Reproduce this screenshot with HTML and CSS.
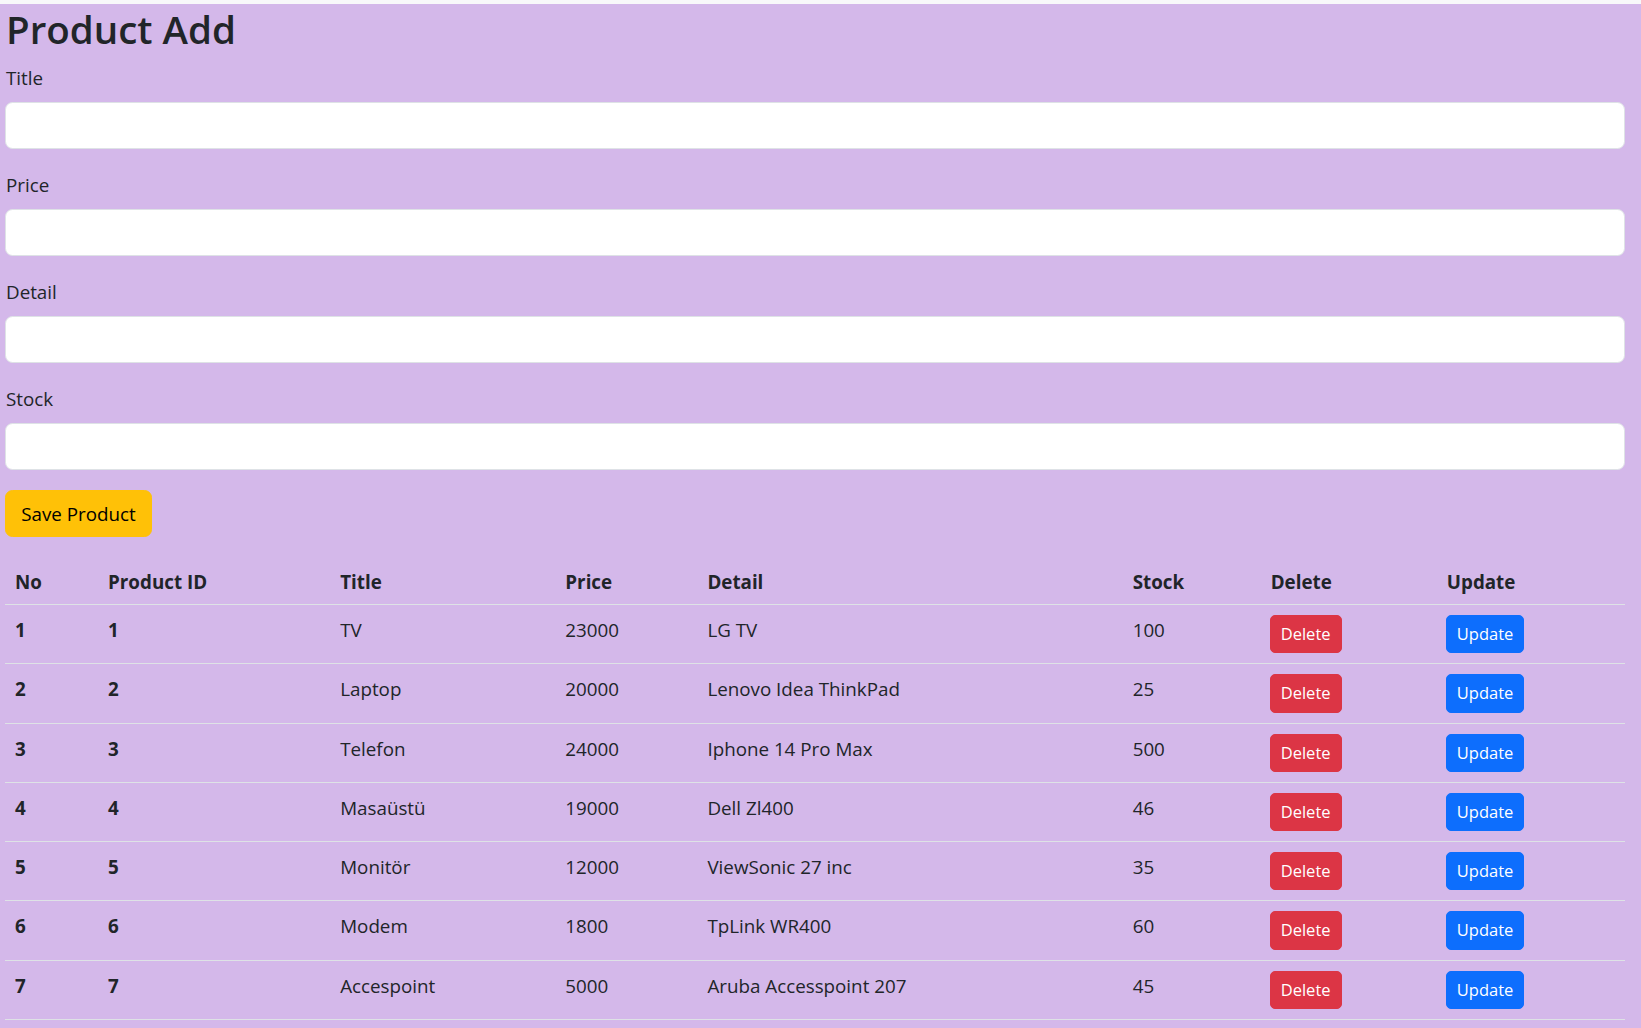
FILE: index.html
```html
<!DOCTYPE html>
<html lang="en">
<head>
<meta charset="utf-8">
<title>Product Add</title>
<link rel="stylesheet" href="styles.css">
</head>
<body>
<div class="page">
  <h1 class="title">Product Add</h1>
  <form class="form">
    <div class="field">
      <label class="label" for="title">Title</label>
      <input class="input" id="title" type="text">
    </div>
    <div class="field">
      <label class="label" for="price">Price</label>
      <input class="input" id="price" type="text">
    </div>
    <div class="field">
      <label class="label" for="detail">Detail</label>
      <input class="input" id="detail" type="text">
    </div>
    <div class="field">
      <label class="label" for="stock">Stock</label>
      <input class="input" id="stock" type="text">
    </div>
    <button type="button" class="btn btn-save">Save Product</button>
  </form>
  <table class="table">
    <colgroup>
      <col class="c-no"><col class="c-id"><col class="c-title"><col class="c-price"><col class="c-detail"><col class="c-stock"><col class="c-del"><col class="c-upd">
    </colgroup>
    <thead>
      <tr><th>No</th><th>Product ID</th><th>Title</th><th>Price</th><th>Detail</th><th>Stock</th><th>Delete</th><th>Update</th></tr>
    </thead>
    <tbody>
      <tr><th>1</th><th>1</th><td>TV</td><td>23000</td><td>LG TV</td><td>100</td><td><button class="btn-sm btn-del">Delete</button></td><td><button class="btn-sm btn-upd">Update</button></td></tr>
      <tr><th>2</th><th>2</th><td>Laptop</td><td>20000</td><td>Lenovo Idea ThinkPad</td><td>25</td><td><button class="btn-sm btn-del">Delete</button></td><td><button class="btn-sm btn-upd">Update</button></td></tr>
      <tr><th>3</th><th>3</th><td>Telefon</td><td>24000</td><td>Iphone 14 Pro Max</td><td>500</td><td><button class="btn-sm btn-del">Delete</button></td><td><button class="btn-sm btn-upd">Update</button></td></tr>
      <tr><th>4</th><th>4</th><td>Masaüstü</td><td>19000</td><td>Dell Zl400</td><td>46</td><td><button class="btn-sm btn-del">Delete</button></td><td><button class="btn-sm btn-upd">Update</button></td></tr>
      <tr><th>5</th><th>5</th><td>Monitör</td><td>12000</td><td>ViewSonic 27 inc</td><td>35</td><td><button class="btn-sm btn-del">Delete</button></td><td><button class="btn-sm btn-upd">Update</button></td></tr>
      <tr><th>6</th><th>6</th><td>Modem</td><td>1800</td><td>TpLink WR400</td><td>60</td><td><button class="btn-sm btn-del">Delete</button></td><td><button class="btn-sm btn-upd">Update</button></td></tr>
      <tr><th>7</th><th>7</th><td>Accespoint</td><td>5000</td><td>Aruba Accesspoint 207</td><td>45</td><td><button class="btn-sm btn-del">Delete</button></td><td><button class="btn-sm btn-upd">Update</button></td></tr>
    </tbody>
  </table>
</div>
</body>
</html>
```
FILE: styles.css
```css
* { box-sizing: border-box; }
html, body { margin: 0; padding: 0; }
body {
  background: #f8f8fa;
  font-family: "Open Sans", "Noto Sans", sans-serif;
  font-size: 18.8px;
  color: #212529;
  padding-top: 4px;
}
.page {
  background: #d4b8ea;
  padding: 0 16px 20px 5px;
  min-height: 1024px;
}
.title {
  margin: 0 0 10px 0;
  padding: 2px 0 0 1px;
  height: 48px;
  font-size: 38.5px;
  line-height: 46px;
  font-weight: 600;
}
.form { margin: 0; }
.field { margin-bottom: 20px; }
.label {
  display: block;
  line-height: 30px;
  padding: 1px 0 0 1px;
  height: 31px;
  margin-bottom: 9px;
}
.input {
  display: block;
  width: 100%;
  height: 47px;
  border: 1px solid #dee2e6;
  border-radius: 7.5px;
  background: #fff;
  font: inherit;
  padding: 0 15px;
  outline: none;
}
.btn {
  font: inherit;
  cursor: pointer;
}
.btn-save {
  display: block;
  height: 47px;
  width: 147px;
  padding: 0;
  background: #ffc107;
  border: 1px solid #ffc107;
  border-radius: 7.5px;
  color: #000;
  margin: 0 0 20px 0;
}
.table {
  width: 100%;
  table-layout: fixed;
  border-collapse: collapse;
}
.c-no { width: 93px; }
.c-id { width: 232px; }
.c-title { width: 225px; }
.c-price { width: 142px; }
.c-detail { width: 425px; }
.c-stock { width: 138px; }
.c-del { width: 176px; }
.c-upd { width: 188px; }
.table th, .table td {
  text-align: left;
  vertical-align: top;
  padding: 10px;
  line-height: 30px;
  border-bottom: 1px solid #dee2e6;
}
.table thead th { padding-bottom: 7px; }
.table th { font-weight: 700; }
.table td { font-weight: 400; }
.btn-sm {
  font-family: inherit;
  font-size: 16.5px;
  height: 38.25px;
  line-height: 36px;
  padding: 0 10px;
  margin-left: -1px;
  border-radius: 5px;
  color: #fff;
  cursor: pointer;
  vertical-align: top;
}
.btn-del { background: #dc3545; border: 1px solid #dc3545; }
.btn-upd { background: #0d6efd; border: 1px solid #0d6efd; }
```
